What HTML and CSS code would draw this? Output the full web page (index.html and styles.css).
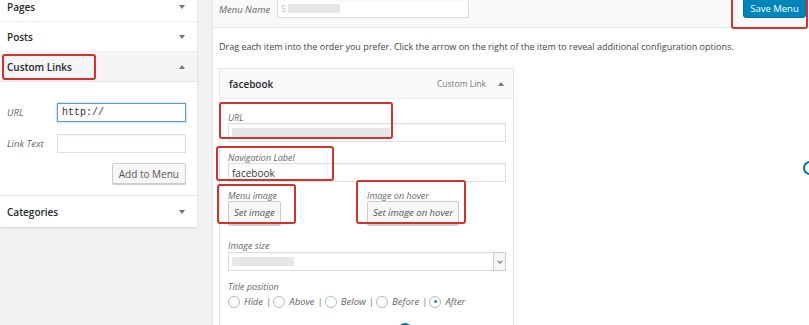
FILE: index.html
```html
<!DOCTYPE html>
<html lang="en">
<head>
    <meta charset="UTF-8">
    <meta name="viewport" content="width=device-width, initial-scale=1.0">
    <title>Menus</title>
    <link rel="stylesheet" href="styles.css">
</head>
<body>

    <div class="page">
        <aside class="sidebar">
            <div class="acc-row acc-cut"><span>Pages</span><i class="caret"></i></div>
            <div class="acc-row"><span>Posts</span><i class="caret"></i></div>
            <div class="acc-row acc-open">
                <span>Custom Links</span><i class="caret up"></i>
                <div class="mark mark-links"></div>
            </div>
            <div class="acc-body">
                <div class="side-field">
                    <label>URL</label>
                    <input type="text" class="focused mono" value="http://">
                </div>
                <div class="side-field">
                    <label>Link Text</label>
                    <input type="text">
                </div>
                <div class="side-actions">
                    <button type="button">Add to Menu</button>
                </div>
            </div>
            <div class="acc-row acc-last"><span>Categories</span><i class="caret"></i></div>
        </aside>

        <main class="editor">
            <div class="editor-head">
                <label class="name-label">Menu Name</label>
                <div class="fake-input name-input"><span class="blur-char">S</span><span class="blur" style="width:52px"></span></div>
                <div class="save-wrap">
                    <button type="button" class="btn-primary">Save Menu</button>
                    <div class="mark mark-save"></div>
                </div>
            </div>

            <div class="editor-body">
                <p class="hint">Drag each item into the order you prefer. Click the arrow on the right of the item to reveal additional configuration options.</p>

                <div class="item">
                    <div class="item-head">
                        <strong>facebook</strong>
                        <span class="item-type">Custom Link</span>
                        <i class="caret up"></i>
                    </div>
                    <div class="item-settings">
                        <div class="setting">
                            <label>URL</label>
                            <div class="fake-input"><span class="blur" style="width:158px"></span></div>
                            <div class="mark mark-url"></div>
                        </div>
                        <div class="setting">
                            <label>Navigation Label</label>
                            <div class="fake-input">facebook</div>
                            <div class="mark mark-nav"></div>
                        </div>
                        <div class="setting-pair">
                            <div class="setting half">
                                <label>Menu image</label>
                                <button type="button" class="btn-small">Set image</button>
                                <div class="mark mark-img"></div>
                            </div>
                            <div class="setting half">
                                <label>Image on hover</label>
                                <button type="button" class="btn-small">Set image on hover</button>
                                <div class="mark mark-hover"></div>
                            </div>
                        </div>
                        <div class="setting">
                            <label class="spaced">Image size</label>
                            <div class="fake-input select"><span class="blur" style="width:62px"></span><i class="select-arrow"></i></div>
                        </div>
                        <div class="setting">
                            <label>Title position</label>
                            <div class="radios">
                                <span class="radio"></span><em>Hide</em><b>|</b>
                                <span class="radio"></span><em>Above</em><b>|</b>
                                <span class="radio"></span><em>Below</em><b>|</b>
                                <span class="radio"></span><em>Before</em><b>|</b>
                                <span class="radio checked"></span><em>After</em>
                            </div>
                        </div>
                        <div class="next-row"><span class="ring"></span></div>
                    </div>
                </div>
            </div>
            <span class="ring ring-side"></span>
        </main>
    </div>

</body>
</html>
```

FILE: styles.css
```css
body {
    margin: 0;
    background: #f1f1f1;
    font-family: "Open Sans", "Noto Sans", sans-serif;
    font-size: 10px;
    color: #444;
    overflow: hidden;
    height: 325px;
}

.page {
    display: flex;
    align-items: flex-start;
    gap: 15px;
    width: 809px;
    height: 325px;
}

/* left accordion */
.sidebar {
    width: 197px;
    flex-shrink: 0;
    background: #fff;
    box-shadow: 0 1px 2px rgba(0, 0, 0, 0.12);
    margin-top: -8px;
}

.acc-row {
    position: relative;
    display: flex;
    align-items: center;
    justify-content: space-between;
    height: 29px;
    padding: 0 12px 0 7px;
    border-bottom: 1px solid #eee;
    font-size: 10px;
    font-weight: 600;
    color: #23282d;
}

    .acc-open {
        background: #f5f5f5;
        border-bottom-color: #e5e5e5;
    }

    .acc-last {
        border-bottom: none;
        border-top: 1px solid #e5e5e5;
        height: 31px;
    }

.caret {
    width: 0;
    height: 0;
    border-left: 3px solid transparent;
    border-right: 3px solid transparent;
    border-top: 4px solid #72777c;
}

    .caret.up {
        border-top: none;
        border-bottom: 4px solid #72777c;
    }

.acc-body {
    padding: 21px 11px 11px 7px;
}

.side-field {
    display: flex;
    align-items: center;
    margin-bottom: 12px;
}

    .side-field + .side-field {
        margin-bottom: 10px;
    }

    .side-field label {
        width: 50px;
        font-size: 9.5px;
        font-style: italic;
        color: #666;
    }

    .side-field input {
        width: 129px;
        height: 19px;
        box-sizing: border-box;
        border: 1px solid #ddd;
        padding: 0 4px;
        font-size: 10px;
        box-shadow: inset 0 1px 2px rgba(0, 0, 0, 0.05);
    }

    .side-field input.focused {
        border-color: #5b9dd9;
        box-shadow: 0 0 2px rgba(30, 140, 190, 0.6);
    }

.mono {
    font-family: "Liberation Mono", monospace;
    color: #333;
}

.side-actions {
    display: flex;
    justify-content: flex-end;
}

    .side-actions button {
        height: 21px;
        padding: 0 6px;
        border: 1px solid #ccc;
        border-radius: 2px;
        background: #f7f7f7;
        box-shadow: 0 1px 0 #ccc;
        font-family: inherit;
        font-size: 10px;
        color: #555;
    }

/* red annotation boxes */
.mark {
    position: absolute;
    border: 2px solid #d0332b;
    border-radius: 3px;
    pointer-events: none;
}

.mark-links {
    left: 2px;
    top: 2px;
    width: 90px;
    height: 22px;
}

/* main editor */
.editor {
    position: relative;
    flex: 1;
    min-width: 0;
    align-self: stretch;
    background: #fff;
    border-left: 1px solid #e5e5e5;
}

.editor-head {
    display: flex;
    align-items: flex-start;
    height: 27px;
    padding-left: 6px;
    background: #f9f9f9;
    border-bottom: 1px solid #e5e5e5;
}

.name-label {
    font-size: 9.5px;
    font-style: italic;
    color: #666;
    margin-top: 3px;
    width: 58px;
}

.name-input {
    width: 192px;
    height: 18px;
    margin-top: -1px;
}

.blur-char {
    color: #bbb;
    font-size: 9px;
    margin-right: 2px;
}

.save-wrap {
    position: relative;
    margin-left: auto;
    margin-right: 3px;
}

.btn-primary {
    display: block;
    width: 63px;
    height: 19px;
    margin-top: -1px;
    padding: 0;
    background: #0085ba;
    border: 1px solid #0073aa;
    border-radius: 0 0 3px 3px;
    color: #fff;
    font-family: inherit;
    font-size: 9.5px;
}

.mark-save {
    left: -12px;
    top: -4px;
    width: 73px;
    height: 29px;
}

.editor-body {
    padding: 0 0 0 6px;
}

.hint {
    margin: 12px 0 15px;
    font-size: 9px;
    color: #444;
}

.item {
    width: 293px;
    border: 1px solid #e5e5e5;
    border-bottom: none;
}

.item-head {
    display: flex;
    align-items: center;
    height: 29px;
    padding: 0 9px;
    background: #fafafa;
    border-bottom: 1px solid #eee;
}

    .item-head strong {
        font-size: 10px;
        font-weight: 600;
        color: #23282d;
    }

.item-type {
    margin-left: auto;
    margin-right: 12px;
    font-size: 8.5px;
    color: #777;
}

.item-settings {
    padding: 13px 7px 0 8px;
}

.setting {
    position: relative;
    margin-bottom: 10px;
}

    .setting label {
        display: block;
        font-size: 9px;
        font-style: italic;
        color: #666;
        line-height: 11px;
    }

        .setting label.spaced {
            margin-bottom: 1px;
        }

.fake-input {
    display: flex;
    align-items: center;
    height: 19px;
    box-sizing: border-box;
    border: 1px solid #ddd;
    padding: 0 3px;
    background: #fff;
    font-size: 10px;
    color: #32373c;
    box-shadow: inset 0 1px 2px rgba(0, 0, 0, 0.04);
}

.blur {
    display: inline-block;
    height: 9px;
    background: #e6e6e6;
    border-radius: 2px;
}

.select {
    position: relative;
}

.select-arrow {
    position: absolute;
    right: -1px;
    top: -1px;
    width: 13px;
    height: 19px;
    box-sizing: border-box;
    border: 1px solid #ccc;
    background: #f5f5f5;
}

    .select-arrow::after {
        content: "";
        position: absolute;
        left: 4px;
        top: 6px;
        width: 3px;
        height: 3px;
        border-right: 1px solid #777;
        border-bottom: 1px solid #777;
        transform: rotate(45deg);
    }

.setting-pair {
    display: flex;
    margin-top: -2px;
    margin-bottom: 5px;
}

.half {
    width: 142px;
}

.btn-small {
    display: block;
    height: 24px;
    line-height: 22px;
    padding: 0 5px;
    margin-top: 0;
    border: 1px solid #ccc;
    border-radius: 2px;
    background: #f7f7f7;
    box-shadow: 0 1px 0 #ccc;
    font-family: inherit;
    font-size: 9.5px;
    font-style: italic;
    color: #555;
}

.mark-url {
    left: -9px;
    top: -10px;
    width: 170px;
    height: 33px;
}

.mark-nav {
    left: -12px;
    top: -6px;
    width: 114px;
    height: 31px;
}

.mark-img {
    left: -11px;
    top: -6px;
    width: 75px;
    height: 36px;
}

.mark-hover {
    left: -11px;
    top: -10px;
    width: 106px;
    height: 40px;
}

.radios {
    display: flex;
    align-items: center;
    margin-top: 3px;
    font-size: 9.5px;
    color: #666;
}

    .radios em {
        margin-left: 4px;
    }

    .radios b {
        font-weight: normal;
        margin: 0 2px 0 3px;
        color: #777;
    }

.radio {
    width: 12px;
    height: 12px;
    box-sizing: border-box;
    border: 1px solid #b4b9be;
    border-radius: 50%;
    background: #fff;
    position: relative;
}

    .radio.checked::after {
        content: "";
        position: absolute;
        left: 3.5px;
        top: 3.5px;
        width: 3px;
        height: 3px;
        border-radius: 50%;
        background: #1e8cbe;
    }

.next-row {
    padding: 5px 0 0 170px;
}

.ring {
    display: inline-block;
    width: 14px;
    height: 14px;
    box-sizing: border-box;
    border: 2px solid #0073aa;
    border-radius: 50%;
}

.ring-side {
    position: absolute;
    right: -8px;
    top: 161px;
}
```
